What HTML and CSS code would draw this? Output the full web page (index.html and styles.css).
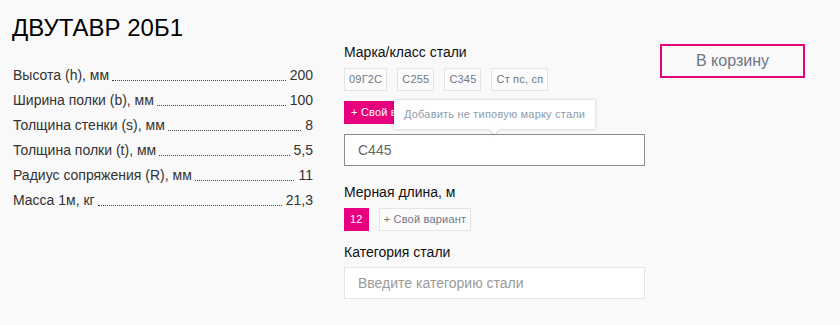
FILE: index.html
```html
<!DOCTYPE html>
<html lang="ru">
<head>
<meta charset="utf-8">
<title>ДВУТАВР 20Б1</title>
<link rel="stylesheet" href="styles.css">
</head>
<body>
<div class="page">
  <div class="left">
    <h1 class="title">ДВУТАВР 20Б1</h1>
    <div class="specs">
      <div class="row"><span class="lbl">Высота (h), мм</span><span class="dots"></span><span class="val">200</span></div>
      <div class="row"><span class="lbl">Ширина полки (b), мм</span><span class="dots"></span><span class="val">100</span></div>
      <div class="row"><span class="lbl">Толщина стенки (s), мм</span><span class="dots"></span><span class="val">8</span></div>
      <div class="row"><span class="lbl">Толщина полки (t), мм</span><span class="dots"></span><span class="val">5,5</span></div>
      <div class="row"><span class="lbl">Радиус сопряжения (R), мм</span><span class="dots"></span><span class="val">11</span></div>
      <div class="row"><span class="lbl">Масса 1м, кг</span><span class="dots"></span><span class="val">21,3</span></div>
    </div>
  </div>
  <div class="middle">
    <div class="label">Марка/класс стали</div>
    <div class="chips">
      <span class="chip">09Г2С</span>
      <span class="chip">С255</span>
      <span class="chip">С345</span>
      <span class="chip">Ст пс, сп</span>
    </div>
    <div class="custom">
      <span class="chip active">+ Свой вариант</span>
      <div class="tooltip">Добавить не типовую марку стали</div>
    </div>
    <div class="input dark">С445</div>
    <div class="label l2">Мерная длина, м</div>
    <div class="chips">
      <span class="chip active">12</span>
      <span class="chip">+ Свой вариант</span>
    </div>
    <div class="label l3">Категория стали</div>
    <div class="input light placeholder">Введите категорию стали</div>
  </div>
  <div class="right">
    <div class="cart">В корзину</div>
  </div>
</div>
</body>
</html>
```
FILE: styles.css
```css
html, body {
  margin: 0;
  padding: 0;
  background: #f9f9f9;
}
body {
  font-family: "Liberation Sans", Arial, sans-serif;
  color: #222;
}
.page {
  display: flex;
  padding: 0 12px;
}
.left {
  width: 301px;
  flex: none;
}
.title {
  margin: 0;
  padding-top: 14px;
  font-size: 24px;
  line-height: 28px;
  font-weight: normal;
  color: #000;
}
.specs {
  margin-top: 21px;
}
.row {
  display: flex;
  align-items: flex-end;
  height: 25px;
  font-size: 14px;
  line-height: 25px;
  color: #333;
}
.lbl, .val {
  flex: none;
  padding-left: 1px;
}
.dots {
  flex: 1;
  border-bottom: 1px dotted #444;
  margin: 0 3px 7px 3px;
}
.middle {
  width: 301px;
  flex: none;
  margin-left: 31px;
  padding-top: 43px;
}
.label {
  font-size: 14px;
  line-height: 18px;
  color: #111;
}
.l2 { margin-top: 17px; }
.l3 { margin-top: 12px; }
.chips {
  display: flex;
  gap: 10px;
  margin-top: 7px;
}
.chip {
  display: inline-block;
  height: 21px;
  line-height: 21px;
  padding: 0 4px;
  border: 1px solid #e4e4e4;
  background: #fbfbfb;
  font-size: 11px;
  letter-spacing: 0.2px;
  color: #6d7889;
  white-space: nowrap;
}
.chip.active {
  background: #e6007e;
  border-color: #e6007e;
  color: #fff;
  padding: 0 5px;
}
.custom {
  position: relative;
  margin-top: 10px;
  height: 23px;
}
.custom .chip { padding: 0 6px; }
.tooltip {
  position: absolute;
  left: 50px;
  top: -1px;
  width: 181px;
  height: 29px;
  line-height: 28px;
  padding: 0 10px;
  background: #fff;
  box-shadow: 0 0 3px rgba(0, 0, 0, 0.22);
  font-size: 11px;
  letter-spacing: 0.2px;
  color: #8c9cb0;
  white-space: nowrap;
}
.tooltip::after {
  content: "";
  position: absolute;
  left: 97px;
  bottom: -4px;
  width: 7px;
  height: 7px;
  background: #fff;
  transform: rotate(45deg);
  box-shadow: 1px 1px 1px rgba(0, 0, 0, 0.15);
}
.input {
  box-sizing: border-box;
  height: 32px;
  line-height: 30px;
  padding: 0 13px;
  background: #fff;
  font-size: 14px;
}
.input.dark {
  margin-top: 10px;
  border: 1px solid #8c8c8c;
  color: #666;
}
.input.light {
  margin-top: 6px;
  border: 1px solid #e6e6e6;
  color: #9a9a9a;
}
.right {
  margin-left: 15px;
  padding-top: 44px;
}
.cart {
  box-sizing: border-box;
  width: 145px;
  height: 34px;
  line-height: 30px;
  border: 2px solid #e6007e;
  text-align: center;
  font-size: 16px;
  color: #6b7788;
}
```
